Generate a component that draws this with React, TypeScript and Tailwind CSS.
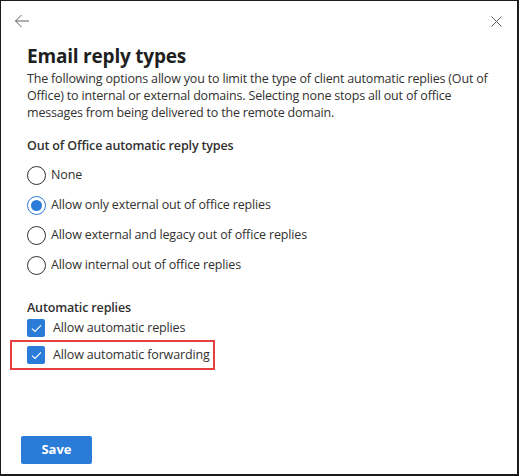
import { useState } from "react";

const replyTypes = [
  "None",
  "Allow only external out of office replies",
  "Allow external and legacy out of office replies",
  "Allow internal out of office replies",
];

const Radio = ({ checked }: { checked: boolean }) => (
  <span
    className={`flex h-[19px] w-[19px] items-center justify-center rounded-full border ${
      checked ? "border-[#2b7cd9]" : "border-[#323130]"
    }`}
  >
    {checked && <span className="h-[11px] w-[11px] rounded-full bg-[#2b7cd9]" />}
  </span>
);

const Checkbox = () => (
  <span className="flex h-[18px] w-[18px] items-center justify-center rounded-[2px] bg-[#2b7cd9]">
    <svg width="11" height="9" viewBox="0 0 11 9" fill="none">
      <path d="M1 4.6 L4 7.4 L10 1.4" stroke="white" strokeWidth="1.1" />
    </svg>
  </span>
);

export default function App() {
  const [selected, setSelected] = useState(1);

  return (
    <div className="flex h-[476px] w-[519px] flex-col border-t border-l border-r-2 border-b-2 border-[#1b1b1b] bg-white font-['Open_Sans',sans-serif] text-[#323130]">
      <div className="flex items-center justify-between pl-[13px] pr-[15px] pt-[13px]">
        <svg width="16" height="14" viewBox="0 0 16 14" fill="none">
          <path d="M15 7 H1.5 M7.5 1 L1.5 7 L7.5 13" stroke="#605e5c" strokeWidth="1" />
        </svg>
        <svg width="11" height="11" viewBox="0 0 11 11" fill="none">
          <path d="M0.5 0.5 L10.5 10.5 M10.5 0.5 L0.5 10.5" stroke="#605e5c" strokeWidth="1" />
        </svg>
      </div>

      <div className="flex flex-1 flex-col px-[26px] pt-[15px]">
        <h1 className="text-[19px] font-bold leading-[26px] tracking-[-0.2px] text-[#201f1e]">
          Email reply types
        </h1>
        <p className="mt-[1px] text-[12.5px] leading-[17px] tracking-[-0.18px]">
          The following options allow you to limit the type of client automatic replies (Out of
          Office) to internal or external domains. Selecting none stops all out of office
          messages from being delivered to the remote domain.
        </p>

        <h2 className="mt-[16px] text-[12.5px] font-semibold leading-[18px] tracking-[-0.15px]">
          Out of Office automatic reply types
        </h2>
        <div className="mt-[11px] flex flex-col gap-[11px]">
          {replyTypes.map((label, i) => (
            <label
              key={label}
              className="flex h-[19px] cursor-pointer items-center gap-[5px] text-[12.5px] tracking-[-0.15px]"
              onClick={() => setSelected(i)}
            >
              <Radio checked={selected === i} />
              {label}
            </label>
          ))}
        </div>

        <h2 className="mt-[24px] text-[12.5px] font-semibold leading-[18px] tracking-[-0.15px]">
          Automatic replies
        </h2>
        <div className="-mt-[1px] flex flex-col">
          <div className="flex h-[24px] items-center gap-[8px] text-[12.5px] tracking-[-0.15px]">
            <Checkbox />
            Allow automatic replies
          </div>
          <div className="-ml-[17px] flex h-[30px] w-[205px] items-center gap-[8px] border-2 border-[#e8403f] pl-[15px] text-[12.5px] tracking-[-0.15px]">
            <Checkbox />
            Allow automatic forwarding
          </div>
        </div>

        <div className="mt-auto pb-[10px]">
          <button className="-ml-[6px] h-[28px] w-[71px] rounded-[2px] bg-[#2b7cd9] text-[13px] font-bold text-white">
            Save
          </button>
        </div>
      </div>
    </div>
  );
}
